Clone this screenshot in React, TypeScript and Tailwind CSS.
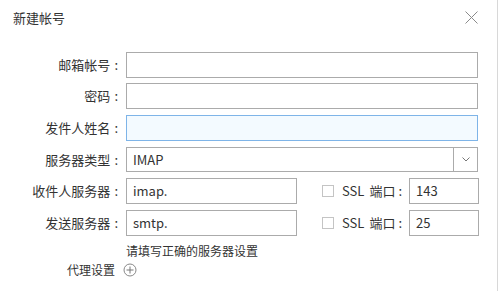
import React from 'react';

const font = { fontFamily: '"Microsoft YaHei", "Noto Sans CJK SC", "Noto Sans", sans-serif' };

const Label = ({ text }: { text: string }) => (
  <div className="w-[126px] shrink-0 pr-[8px] text-right text-[13px] text-[#333]">
    {text}
    <span className="ml-[4px]">:</span>
  </div>
);

const Box = ({ w, value, active }: { w: string; value?: string; active?: boolean }) => (
  <div
    className={`${w} h-full border flex items-center px-[6px] text-[13px] text-[#333] ${
      active ? 'border-[#7eb4e8] bg-[#f3faff]' : 'border-[#ababab] bg-white'
    }`}
  >
    {value}
  </div>
);

const ServerRow = ({ label, value, port }: { label: string; value: string; port: string }) => (
  <div className="flex items-center h-[26px]">
    <Label text={label} />
    <Box w="w-[171px]" value={value} />
    <div className="ml-[25px] w-[12px] h-[12px] border border-[#c4c4c4] bg-white" />
    <span className="ml-[8px] text-[13px] text-[#333]">SSL</span>
    <span className="ml-[5px] text-[13px] text-[#333]">端口</span>
    <span className="ml-[3px] text-[13px] text-[#333]">:</span>
    <div className="ml-[7px] h-full">
      <Box w="w-[70px]" value={port} />
    </div>
  </div>
);

export default function App() {
  return (
    <div className="w-[500px] h-[291px] bg-white relative overflow-hidden" style={font}>
      <div className="absolute right-[2px] top-0 bottom-0 w-px bg-[#d8d8d8]" />
      <div className="flex items-center justify-between h-[36px] pl-[13px] pr-[22px]">
        <span className="text-[13px] text-[#333]">新建帐号</span>
        <svg width="13" height="13" viewBox="0 0 13 13" className="mt-[-2px]">
          <path d="M0.5 0.5 L12.5 12.5 M12.5 0.5 L0.5 12.5" stroke="#8a8a8a" strokeWidth="1" />
        </svg>
      </div>

      <div className="flex flex-col mt-[16px]">
        <div className="flex items-center h-[26px]">
          <Label text="邮箱帐号" />
          <Box w="w-[352px]" />
        </div>
        <div className="flex items-center h-[26px] mt-[5px]">
          <Label text="密码" />
          <Box w="w-[352px]" />
        </div>
        <div className="flex items-center h-[26px] mt-[6px]">
          <Label text="发件人姓名" />
          <Box w="w-[352px]" active />
        </div>
        <div className="flex items-center h-[25px] mt-[6px]">
          <Label text="服务器类型" />
          <div className="w-[352px] h-full border border-[#ababab] flex">
            <div className="flex-1 flex items-center px-[6px] text-[13px] text-[#333]">IMAP</div>
            <div className="w-[24px] border-l border-[#ababab] flex items-center justify-center">
              <svg width="8" height="5" viewBox="0 0 8 5">
                <path d="M0.5 0.5 L4 4 L7.5 0.5" fill="none" stroke="#777" strokeWidth="1" />
              </svg>
            </div>
          </div>
        </div>
        <div className="mt-[6px]">
          <ServerRow label="收件人服务器" value="imap." port="143" />
        </div>
        <div className="mt-[6px]">
          <ServerRow label="发送服务器" value="smtp." port="25" />
        </div>
        <div className="pl-[126px] mt-[6px] text-[12px] text-[#333] leading-[18px]">请填写正确的服务器设置</div>
        <div className="flex items-center mt-0 pl-[67px] h-[20px]">
          <span className="text-[12px] text-[#333]">代理设置</span>
          <svg width="14" height="14" viewBox="0 0 14 14" className="ml-[8px]">
            <circle cx="7" cy="7" r="6" fill="none" stroke="#888" strokeWidth="1" />
            <path d="M7 3.5 V10.5 M3.5 7 H10.5" stroke="#777" strokeWidth="1" />
          </svg>
        </div>
      </div>
    </div>
  );
}
